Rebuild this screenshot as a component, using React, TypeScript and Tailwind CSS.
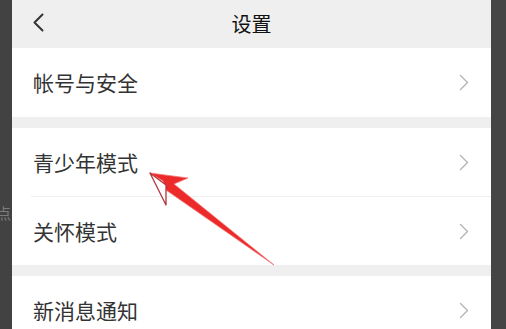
const font = { fontFamily: '"Noto Sans CJK SC", "Noto Sans", sans-serif' }

function Chevron() {
    return (
        <svg width="10" height="17" viewBox="0 0 10 17" fill="none">
            <path d="M1.5 1.5 L8.5 8.5 L1.5 15.5" stroke="#b4b4b4" strokeWidth="1.4" strokeLinecap="round" strokeLinejoin="round" />
        </svg>
    )
}

function Row({ label, className }: { label: string; className: string }) {
    return (
        <div className={`flex items-center justify-between bg-white pl-[21px] pr-[22px] ${className}`}>
            <span className="text-[21px] leading-none text-[#333333]">{label}</span>
            <Chevron />
        </div>
    )
}

export default function App() {
    return (
        <div className="relative flex h-[329px] w-[506px] overflow-hidden bg-white" style={font}>
            <div className="relative w-[12px] shrink-0 overflow-hidden bg-[#424242]">
                <span className="absolute left-[-4px] top-[205px] text-[15px] leading-none text-[#7c7c7c]">点</span>
            </div>
            <div className="flex flex-1 flex-col">
                <div className="relative flex h-[48px] shrink-0 items-center justify-center bg-[#efefef]">
                    <svg className="absolute left-[20px] top-[13px]" width="13" height="19" viewBox="0 0 13 19" fill="none">
                        <path d="M10.5 1.5 L2.5 9.5 L10.5 17.5" stroke="#333333" strokeWidth="2" strokeLinecap="round" strokeLinejoin="round" />
                    </svg>
                    <span className="text-[20px] leading-none text-[#111111]">设置</span>
                </div>
                <Row label="帐号与安全" className="h-[69px] shrink-0" />
                <div className="h-[11px] shrink-0 bg-[#efefef]" />
                <Row label="青少年模式" className="h-[68px] shrink-0" />
                <div className="flex h-[1px] shrink-0 bg-white">
                    <div className="ml-[19px] flex-1 bg-[#f0f0f0]" />
                </div>
                <Row label="关怀模式" className="h-[68px] shrink-0" />
                <div className="h-[11px] shrink-0 bg-[#efefef]" />
                <Row label="新消息通知" className="h-[68px] shrink-0" />
            </div>
            <div className="w-[15px] shrink-0 bg-[#454545]" />

            <svg className="pointer-events-none absolute left-0 top-0" width="506" height="329" viewBox="0 0 506 329">
                <polygon points="150,173 188,178 174,184 274,265 166,190 163,181" fill="#ec2a2a" stroke="#f47a7a" strokeWidth="0.8" strokeLinejoin="round" />
                <polygon points="150,173 166,205 166,185" fill="#ffffff" stroke="#b3343a" strokeWidth="1.3" strokeLinejoin="round" />
            </svg>
        </div>
    )
}
